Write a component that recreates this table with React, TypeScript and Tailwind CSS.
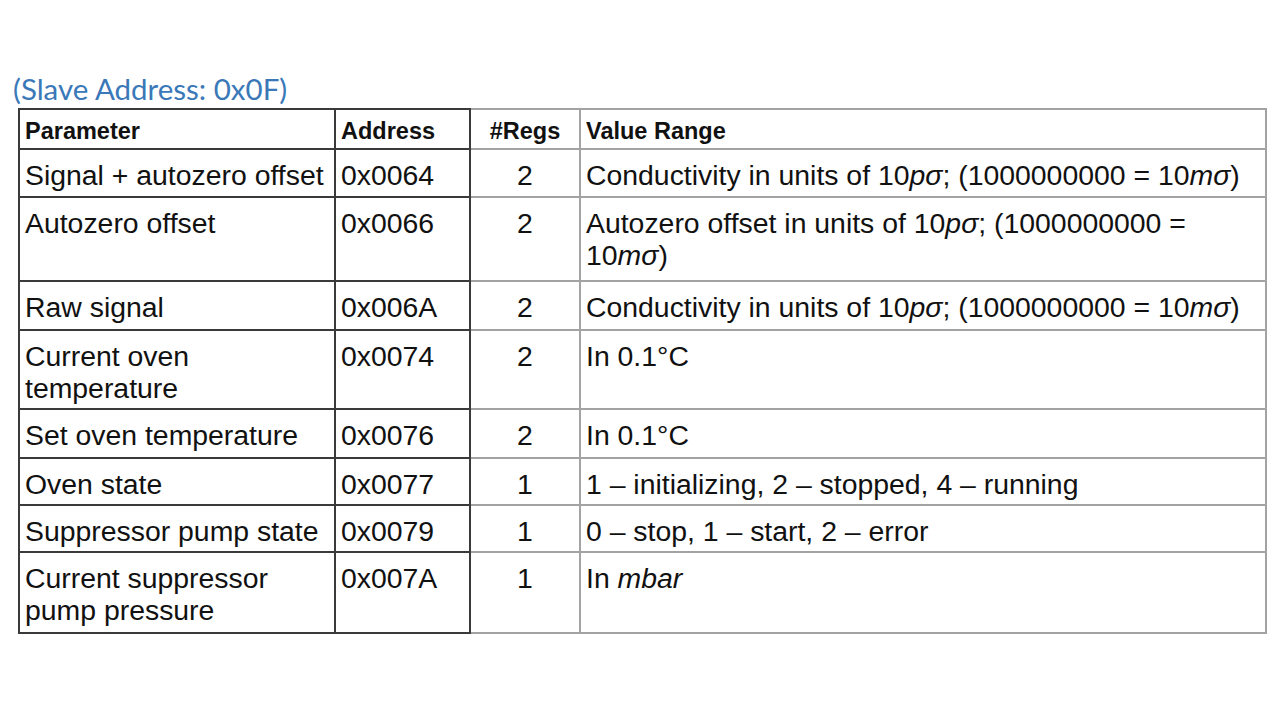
import React from 'react';

type Row = {
  param: React.ReactNode;
  address: string;
  regs: string;
  range: React.ReactNode;
  h: string;
};

const Sig = () => <i>σ</i>;

const rows: Row[] = [
  {
    param: 'Signal + autozero offset',
    address: '0x0064',
    regs: '2',
    range: (
      <>
        Conductivity in units of 10<i>p</i>
        <Sig />; (1000000000 = 10<i>m</i>
        <Sig />)
      </>
    ),
    h: 'h-[48px]',
  },
  {
    param: 'Autozero offset',
    address: '0x0066',
    regs: '2',
    range: (
      <>
        Autozero offset in units of 10<i>p</i>
        <Sig />; (1000000000 =<br />
        10<i>m</i>
        <Sig />)
      </>
    ),
    h: 'h-[84px]',
  },
  {
    param: 'Raw signal',
    address: '0x006A',
    regs: '2',
    range: (
      <>
        Conductivity in units of 10<i>p</i>
        <Sig />; (1000000000 = 10<i>m</i>
        <Sig />)
      </>
    ),
    h: 'h-[49px]',
  },
  {
    param: (
      <>
        Current oven
        <br />
        temperature
      </>
    ),
    address: '0x0074',
    regs: '2',
    range: 'In 0.1°C',
    h: 'h-[79px]',
  },
  { param: 'Set oven temperature', address: '0x0076', regs: '2', range: 'In 0.1°C', h: 'h-[49px]' },
  {
    param: 'Oven state',
    address: '0x0077',
    regs: '1',
    range: '1 – initializing, 2 – stopped, 4 – running',
    h: 'h-[47px]',
  },
  {
    param: 'Suppressor pump state',
    address: '0x0079',
    regs: '1',
    range: '0 – stop, 1 – start, 2 – error',
    h: 'h-[47px]',
  },
  {
    param: (
      <>
        Current suppressor
        <br />
        pump pressure
      </>
    ),
    address: '0x007A',
    regs: '1',
    range: (
      <>
        In <i>mbar</i>
      </>
    ),
    h: 'h-[81px]',
  },
];

const dark = 'border-[#3a3a3a]';
const gray = 'border-[#a3a3a3]';

export default function App() {
  return (
    <div className="h-[720px] w-[1280px] bg-white pt-[71px] font-['Liberation_Sans',Arial,sans-serif] text-[#111]">
      <div className="pl-[13px] font-['Lato',sans-serif] text-[29.5px] leading-[35px] text-[#3a78b8]">
        (Slave Address: 0x0F)
      </div>
      <table className="ml-[18px] mt-[2px] w-[1249px] table-fixed border-separate border-spacing-0">
        <colgroup>
          <col className="w-[318px]" />
          <col className="w-[135px]" />
          <col className="w-[110px]" />
          <col />
        </colgroup>
        <thead>
          <tr className="h-[42px] text-left align-top text-[23.5px] font-bold leading-[28px]">
            <th className={`border-2 ${dark} pl-[5px] pt-[7px]`}>Parameter</th>
            <th className={`border-y-2 border-r-2 ${dark} pl-[5px] pt-[7px]`}>Address</th>
            <th className={`border-y-2 border-r-2 ${gray} pt-[7px] text-center`}>#Regs</th>
            <th className={`border-y-2 border-r-2 ${gray} pl-[5px] pt-[7px]`}>Value Range</th>
          </tr>
        </thead>
        <tbody className="text-[28.4px] leading-[32px]">
          {rows.map((r) => (
            <tr key={r.address} className={`${r.h} align-top`}>
              <td className={`border-x-2 border-b-2 ${dark} pl-[5px] pt-[9px]`}>{r.param}</td>
              <td className={`border-b-2 border-r-2 ${dark} pl-[5px] pt-[9px]`}>{r.address}</td>
              <td className={`border-b-2 border-r-2 ${gray} pt-[9px] text-center`}>{r.regs}</td>
              <td className={`border-b-2 border-r-2 ${gray} pl-[5px] pt-[9px]`}>{r.range}</td>
            </tr>
          ))}
        </tbody>
      </table>
    </div>
  );
}
